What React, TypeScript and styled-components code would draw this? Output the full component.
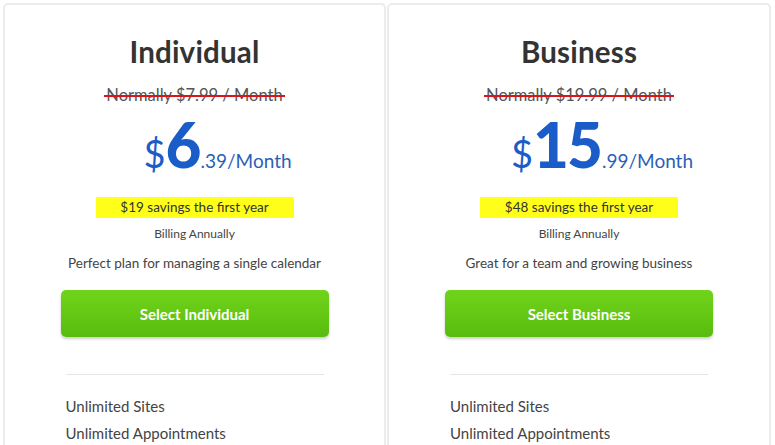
import React from "react";
import styled, { createGlobalStyle } from "styled-components";

const Global = createGlobalStyle`
  html, body { margin: 0; padding: 0; background: #ffffff; overflow: hidden; }
  body { font-family: "Lato", "Open Sans", sans-serif; }
`;

const Page = styled.div`
  display: grid;
  grid-template-columns: 383px 384px;
  gap: 1px;
  padding: 3px 4px 0 3px;
  height: 445px;
  box-sizing: border-box;
`;

const Card = styled.div`
  border: 2px solid #ececec;
  border-bottom: none;
  border-radius: 5px 5px 0 0;
  display: flex;
  flex-direction: column;
  align-items: center;
  padding-top: 30px;
`;

const Title = styled.h2`
  margin: 0;
  font-size: 29.5px;
  line-height: 34px;
  font-weight: 700;
  color: #333333;
  letter-spacing: 0.2px;
`;

const Strike = styled.div`
  position: relative;
  margin-top: 16px;
  font-size: 16.5px;
  line-height: 20px;
  color: #555555;
  padding: 0 2px;
  &::after {
    content: "";
    position: absolute;
    left: 0;
    right: 0;
    top: 10px;
    height: 2px;
    background: #d8141c;
  }
`;

const Price = styled.div`
  display: flex;
  align-items: baseline;
  margin-top: 8px;
  padding-left: 46px;
  color: #1a5cc8;
  height: 66px;
`;

const Dollar = styled.span`
  font-size: 38px;
  font-weight: 400;
  line-height: 1;
`;

const Whole = styled.span`
  font-size: 62px;
  font-weight: 900;
  line-height: 1;
  letter-spacing: -2px;
  margin-right: 1px;
`;

const Cents = styled.span`
  font-size: 19px;
  font-weight: 400;
  color: #2a5fb8;
`;

const Savings = styled.div`
  margin-top: 18px;
  width: 198px;
  height: 21px;
  background: #ffff1a;
  color: #333333;
  font-size: 13.5px;
  line-height: 21px;
  text-align: center;
`;

const Billing = styled.div`
  margin-top: 8px;
  font-size: 12px;
  line-height: 16px;
  color: #444444;
`;

const Desc = styled.div`
  margin-top: 12px;
  font-size: 13.5px;
  line-height: 18px;
  color: #444444;
`;

const SelectButton = styled.button`
  margin-top: 18px;
  width: 268px;
  height: 47px;
  border: none;
  border-radius: 5px;
  background: linear-gradient(#71d41b, #57bc0e);
  box-shadow: 0 2px 3px rgba(0, 0, 0, 0.2);
  color: #ffffff;
  font-family: "Lato", sans-serif;
  font-size: 15px;
  font-weight: 700;
  cursor: pointer;
`;

const Divider = styled.hr`
  margin: 37px 0 0;
  width: 258px;
  border: none;
  border-top: 1px solid #e6e6e6;
`;

const Features = styled.ul`
  list-style: none;
  margin: 21px 0 0;
  padding: 0;
  width: 258px;
  display: flex;
  flex-direction: column;
  gap: 7px;
`;

const Feature = styled.li`
  font-size: 15px;
  line-height: 20px;
  color: #444444;
`;

type Plan = {
  name: string;
  normal: string;
  whole: string;
  cents: string;
  savings: string;
  desc: string;
};

const plans: Plan[] = [
  {
    name: "Individual",
    normal: "Normally $7.99 / Month",
    whole: "6",
    cents: ".39/Month",
    savings: "$19 savings the first year",
    desc: "Perfect plan for managing a single calendar",
  },
  {
    name: "Business",
    normal: "Normally $19.99 / Month",
    whole: "15",
    cents: ".99/Month",
    savings: "$48 savings the first year",
    desc: "Great for a team and growing business",
  },
];

export default function App() {
  return (
    <>
      <Global />
      <Page>
        {plans.map((p) => (
          <Card key={p.name}>
            <Title>{p.name}</Title>
            <Strike>{p.normal}</Strike>
            <Price>
              <Dollar>$</Dollar>
              <Whole>{p.whole}</Whole>
              <Cents>{p.cents}</Cents>
            </Price>
            <Savings>{p.savings}</Savings>
            <Billing>Billing Annually</Billing>
            <Desc>{p.desc}</Desc>
            <SelectButton>Select {p.name}</SelectButton>
            <Divider />
            <Features>
              <Feature>Unlimited Sites</Feature>
              <Feature>Unlimited Appointments</Feature>
            </Features>
          </Card>
        ))}
      </Page>
    </>
  );
}
